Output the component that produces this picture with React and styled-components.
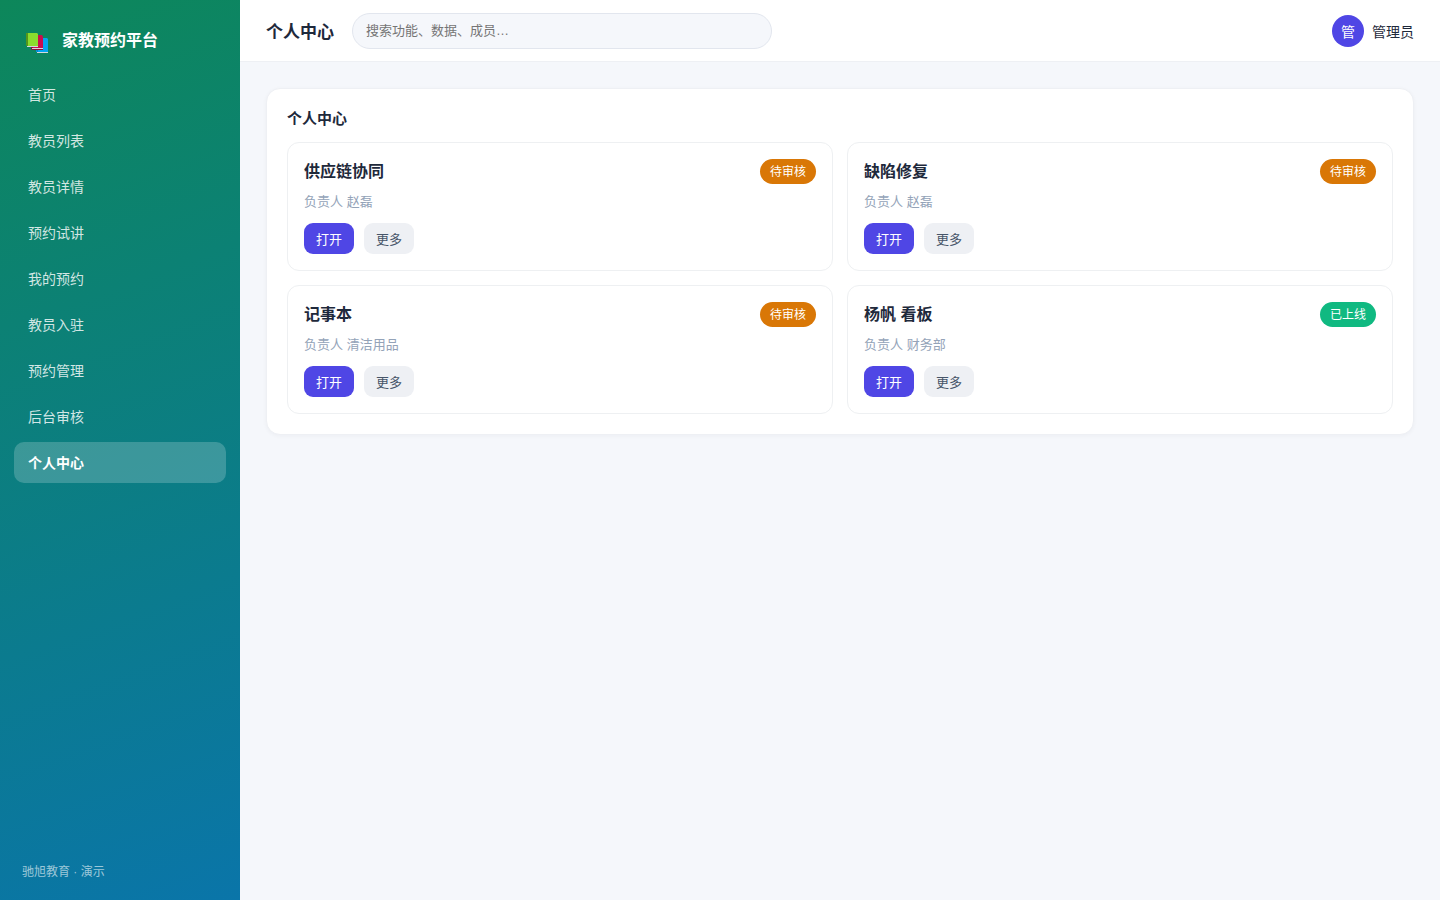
import React from 'react'
import styled, { createGlobalStyle } from 'styled-components'

const navItems = [
  '首页',
  '教员列表',
  '教员详情',
  '预约试讲',
  '我的预约',
  '教员入驻',
  '预约管理',
  '后台审核',
  '个人中心',
]

const records = [
  { title: '供应链协同', owner: '赵磊', status: '待审核' },
  { title: '缺陷修复', owner: '赵磊', status: '待审核' },
  { title: '记事本', owner: '清洁用品', status: '待审核' },
  { title: '杨帆 看板', owner: '财务部', status: '已上线' },
]

const BooksLogo = () => (
  <svg width='24' height='24' viewBox='0 0 24 24' aria-hidden='true'>
    <path fill='#03a5f0' d='M12 7h9l1 1v13H10v-2h2z' />
    <path fill='#0b7fc4' d='M10 19h2v2h-1z' />
    <path fill='#d5d8dc' d='M11 21h11v1H11z' />
    <path fill='#c90d4e' d='M6 4h10l1 2v11H6z' />
    <path fill='#8c0f3a' d='M5 16h2v1h10v2H6l-1-1z' />
    <path fill='#d5d8dc' d='M6 17h11v1H6z' />
    <path fill='#55951c' d='M0 2h2v13H1l-1-1z' />
    <path fill='#8bdc2e' d='M2 2h9l1 1v12H2z' />
    <path fill='#d5d8dc' d='M1 15h11v1H1z' />
  </svg>
)

const App = () => {
  return (
    <>
      <GlobalStyle />
      <Layout>
        <Sidebar>
          <Brand>
            <BooksLogo />
            家教预约平台
          </Brand>
          <Nav>
            {navItems.map((item) => (
              <NavLink key={item} href='#' $active={item === '个人中心'}>
                {item}
              </NavLink>
            ))}
          </Nav>
          <SidebarFooter>驰旭教育 · 演示</SidebarFooter>
        </Sidebar>
        <Main>
          <Topbar>
            <PageTitle>个人中心</PageTitle>
            <Search
              type='search'
              aria-label='搜索'
              placeholder='搜索功能、数据、成员…'
            />
            <User>
              <Avatar>管</Avatar>
              管理员
            </User>
          </Topbar>
          <Content>
            <Panel>
              <PanelTitle>个人中心</PanelTitle>
              <CardGrid>
                {records.map(({ title, owner, status }) => (
                  <Card key={title}>
                    <CardHead>
                      <CardTitle>{title}</CardTitle>
                      <Badge $online={status === '已上线'}>{status}</Badge>
                    </CardHead>
                    <Owner>负责人 {owner}</Owner>
                    <Actions>
                      <Button type='button' $primary>
                        打开
                      </Button>
                      <Button type='button'>更多</Button>
                    </Actions>
                  </Card>
                ))}
              </CardGrid>
            </Panel>
          </Content>
        </Main>
      </Layout>
    </>
  )
}

const GlobalStyle = createGlobalStyle`
  * {
    box-sizing: border-box;
  }

  body {
    margin: 0;
    background: #f5f7fb;
    color: #1e293b;
    font-family: 'Liberation Sans', 'Noto Sans CJK SC', sans-serif;
    font-size: 14px;
  }

  h1,
  h2,
  h3,
  p {
    margin: 0;
  }

  button,
  input {
    font-family: inherit;
  }
`

const Layout = styled.div`
  display: flex;
  min-height: 100vh;
`

const Sidebar = styled.aside`
  display: flex;
  flex-direction: column;
  flex: 0 0 240px;
  padding: 20px 14px;
  background: linear-gradient(160deg, #0d875a, #0a75a9);
  color: #fff;
`

const Brand = styled.div`
  display: flex;
  align-items: center;
  gap: 12px;
  height: 38px;
  margin-bottom: 16px;
  padding: 0 12px;
  font-size: 16px;
  font-weight: 700;

  svg {
    margin-top: 8px;
  }
`

const Nav = styled.nav`
  display: flex;
  flex-direction: column;
  flex: 1;
  gap: 5px;
`

const NavLink = styled.a`
  padding: 11px 14px 9px;
  border-radius: 10px;
  background: ${({ $active }) =>
    $active ? 'rgba(255, 255, 255, 0.2)' : 'transparent'};
  color: ${({ $active }) => ($active ? '#fff' : 'rgba(255, 255, 255, 0.82)')};
  font-size: 14px;
  font-weight: ${({ $active }) => ($active ? 700 : 400)};
  line-height: 21px;
  text-decoration: none;
`

const SidebarFooter = styled.div`
  padding: 0 8px;
  color: rgba(255, 255, 255, 0.6);
  font-size: 12px;
  line-height: 16px;
`

const Main = styled.main`
  flex: 1;
  min-width: 0;
`

const Topbar = styled.header`
  display: flex;
  align-items: center;
  gap: 18px;
  height: 62px;
  padding: 0 26px;
  border-bottom: 1px solid #eef0f4;
  background: #fff;
`

const PageTitle = styled.h1`
  font-size: 17px;
  white-space: nowrap;
`

const Search = styled.input`
  flex: 0 1 420px;
  min-width: 0;
  height: 36px;
  padding: 0 13px;
  border: 1px solid #e2e6ee;
  border-radius: 18px;
  outline: none;
  background: #f5f7fb;
  font-size: 13px;
  appearance: none;

  &::placeholder {
    color: #757575;
  }
`

const User = styled.div`
  display: flex;
  align-items: center;
  gap: 8px;
  margin-left: auto;
  white-space: nowrap;
`

const Avatar = styled.span`
  display: grid;
  place-items: center;
  width: 32px;
  height: 32px;
  border-radius: 50%;
  background: #4f46e5;
  color: #fff;
`

const Content = styled.div`
  padding: 26px;
`

const Panel = styled.section`
  padding: 20px;
  border: 1px solid #eef0f4;
  border-radius: 14px;
  background: #fff;
  box-shadow: 0 1px 4px rgba(15, 23, 42, 0.04);
`

const PanelTitle = styled.h2`
  margin-bottom: 14px;
  font-size: 15px;
  line-height: 19px;
`

const CardGrid = styled.div`
  display: grid;
  grid-template-columns: 1fr 1fr;
  gap: 14px;
`

const Card = styled.article`
  padding: 16px;
  border: 1px solid #eef0f2;
  border-radius: 12px;
`

const CardHead = styled.div`
  display: flex;
  align-items: center;
  justify-content: space-between;
`

const CardTitle = styled.h3`
  padding-top: 1px;
  font-size: 16px;
  line-height: 24px;
`

const Badge = styled.span`
  padding: 1px 10px 0;
  border-radius: 13px;
  background: ${({ $online }) => ($online ? '#10b981' : '#d97706')};
  color: #fff;
  font-size: 12px;
  line-height: 24px;
`

const Owner = styled.p`
  margin: 7px 0 11px;
  color: #94a3b8;
  font-size: 13px;
  line-height: 21px;
`

const Actions = styled.div`
  display: flex;
  gap: 10px;
`

const Button = styled.button`
  height: 31px;
  padding: 0 12px 1px;
  border: 0;
  border-radius: 9px;
  background: ${({ $primary }) => ($primary ? '#4f46e5' : '#eef0f4')};
  color: ${({ $primary }) => ($primary ? '#fff' : '#475569')};
  font-size: 13px;
  cursor: pointer;
`

export default App
